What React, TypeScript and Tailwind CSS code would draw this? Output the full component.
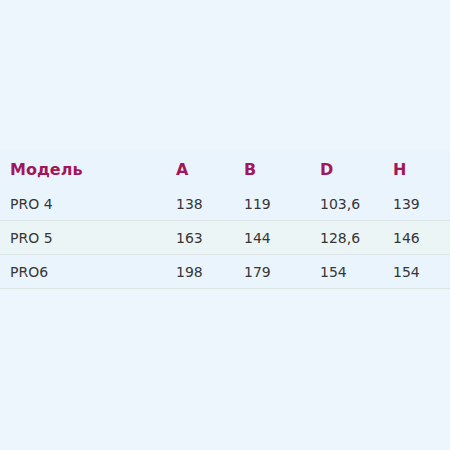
import React from "react";

const rows = [
  ["PRO 4", "138", "119", "103,6", "139"],
  ["PRO 5", "163", "144", "128,6", "146"],
  ["PRO6", "198", "179", "154", "154"],
];

export default function App() {
  return (
    <div
      className="w-[450px] h-[450px] bg-[#edf6fd] pt-[150px] overflow-hidden"
      style={{ fontFamily: '"DejaVu Sans", Verdana, sans-serif' }}
    >
      <div className="bg-[#eaf4fc]">
        <div className="grid grid-cols-[166px_68px_76px_73px_1fr] pl-[10px] h-[37px] items-center pt-[2px] text-[16px] font-bold text-[#a2175a]">
          <div>Модель</div>
          <div>A</div>
          <div>B</div>
          <div>D</div>
          <div>H</div>
        </div>
        {rows.map((r, i) => (
          <div
            key={i}
            className={
              "grid grid-cols-[166px_68px_76px_73px_1fr] pl-[10px] h-[34px] items-center pt-[2px] text-[14px] text-[#363636] border-b border-[#dde5e6] " +
              (i === 1 ? "bg-[#ecf5f5]" : "bg-[#eaf4fc]")
            }
          >
            {r.map((c, j) => (
              <div key={j}>{c}</div>
            ))}
          </div>
        ))}
      </div>
    </div>
  );
}
